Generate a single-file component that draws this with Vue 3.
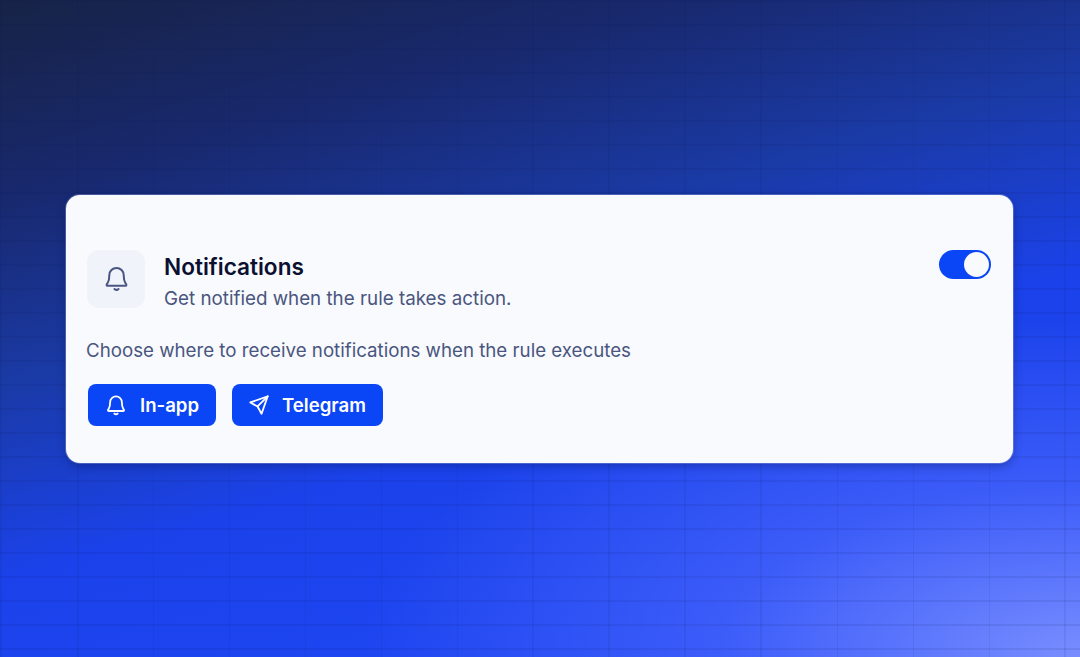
<script setup>
const channels = ['In-app', 'Telegram']
</script>

<template>
  <main class="page">
    <section class="card">
      <header class="head">
        <div class="tile">
          <svg class="tile-icon" viewBox="0 0 24 24" fill="none" stroke="currentColor" stroke-width="1.8" stroke-linecap="round" stroke-linejoin="round">
            <path d="M12 2.600a6.400 6.400 0 0 0-6.400 6.400c0 3.600-.7 5.700-1.500 7-.5.800-.9 1.300-.9 1.700 0 .5.400.8 1 .8h15.600c.6 0 1-.3 1-.8 0-.4-.4-.9-.9-1.700-.8-1.300-1.500-3.400-1.500-7A6.400 6.400 0 0 0 12 2.600Z"/>
            <path d="M10.200 21.300c.5.500 1.100.8 1.800.8s1.300-.3 1.800-.8"/>
          </svg>
        </div>
        <div class="titles">
          <h2>Notifications</h2>
          <p>Get notified when the rule takes action.</p>
        </div>
        <span class="toggle"><span class="knob"></span></span>
      </header>
      <p class="hint">Choose where to receive notifications when the rule executes</p>
      <div class="actions">
        <button v-for="c in channels" :key="c" class="chip" :class="c === 'In-app' ? 'chip-app' : 'chip-tg'">
          <svg v-if="c === 'In-app'" class="chip-icon" viewBox="0 0 24 24" fill="none" stroke="currentColor" stroke-width="2" stroke-linecap="round" stroke-linejoin="round">
            <path d="M12 2.600a6.400 6.400 0 0 0-6.400 6.400c0 3.600-.7 5.700-1.500 7-.5.800-.9 1.300-.9 1.700 0 .5.400.8 1 .8h15.600c.6 0 1-.3 1-.8 0-.4-.4-.9-.9-1.700-.8-1.300-1.500-3.400-1.500-7A6.400 6.400 0 0 0 12 2.600Z"/>
            <path d="M10.200 21.300c.5.500 1.100.8 1.800.8s1.300-.3 1.800-.8"/>
          </svg>
          <svg v-else class="chip-icon" viewBox="0 0 24 24" fill="none" stroke="currentColor" stroke-width="2" stroke-linecap="round" stroke-linejoin="round">
            <path d="M21.500 2.500 2.500 9.200l7.900 4.400 4.400 7.900 6.700-19Z"/>
            <path d="M21.500 2.500 10.400 13.600"/>
          </svg>
          <span>{{ c }}</span>
        </button>
      </div>
    </section>
  </main>
</template>

<style scoped>
.page {
  box-sizing: border-box;
  width: 1080px;
  height: 657px;
  padding-right: 1px;
  display: flex;
  align-items: center;
  justify-content: center;
  overflow: hidden;
  font-family: Inter, "Noto Sans", sans-serif;
  background:
    repeating-linear-gradient(90deg, transparent 0 0.5px, rgba(8, 20, 90, 0.08) 0.5px 2.5px, transparent 2.5px 76px),
    repeating-linear-gradient(180deg, transparent 0 0.5px, rgba(8, 20, 90, 0.09) 0.5px 2.5px, transparent 2.5px 24px),
    radial-gradient(720px 340px at 100% 100%, rgba(125, 145, 255, 0.95), rgba(90, 115, 255, 0.5) 50%, rgba(60, 90, 255, 0) 100%),
    linear-gradient(164deg, #172346 0%, #18286c 20%, #1a3aa6 40%, #1b42ea 60%, #2048f8 100%);
}
.card {
  box-sizing: border-box;
  width: 947px;
  height: 268px;
  padding: 55px 22px 0 20px;
  background: #f8fafd;
  border-radius: 14px;
  box-shadow: 0 0 0 1px rgba(190, 205, 245, 0.3), 0 3px 10px rgba(8, 20, 90, 0.4);
}
.head {
  display: flex;
  align-items: flex-start;
}
.tile {
  width: 58px;
  height: 58px;
  margin-left: 1px;
  border-radius: 12px;
  background: #f1f3fa;
  display: flex;
  align-items: center;
  justify-content: center;
  color: #4a5680;
  flex: none;
}
.tile-icon { width: 27px; height: 27px; }
.titles { margin-left: 19px; flex: 1; }
h2 {
  margin: 0;
  padding-top: 3px;
  font-size: 22.6px;
  line-height: 28px;
  font-weight: 600;
  color: #0b1030;
}
.titles p {
  margin: 6px 0 0;
  font-size: 18.8px;
  line-height: 24px;
  color: #4a5680;
}
.toggle {
  width: 52px;
  height: 29px;
  border-radius: 15px;
  background: #0a46f5;
  position: relative;
  flex: none;
}
.knob {
  position: absolute;
  right: 2px;
  top: 2px;
  width: 25px;
  height: 25px;
  border-radius: 50%;
  background: #f8fafd;
}
.hint {
  margin: 28px 0 0;
  font-size: 18.72px;
  line-height: 24px;
  color: #4a5680;
}
.actions {
  display: flex;
  gap: 16px;
  margin: 21px 0 0 2px;
}
.chip {
  height: 42px;
  padding: 0;
  border: 0;
  border-radius: 8px;
  background: #0a46f5;
  color: #fff;
  font: 600 18.6px Inter, "Noto Sans", sans-serif;
  display: flex;
  align-items: center;
}
.chip-app { width: 128px; padding-left: 17px; gap: 13px; }
.chip-tg { width: 151px; padding-left: 16px; gap: 12px; }
.chip-icon { width: 22px; height: 22px; flex: none; }
</style>
